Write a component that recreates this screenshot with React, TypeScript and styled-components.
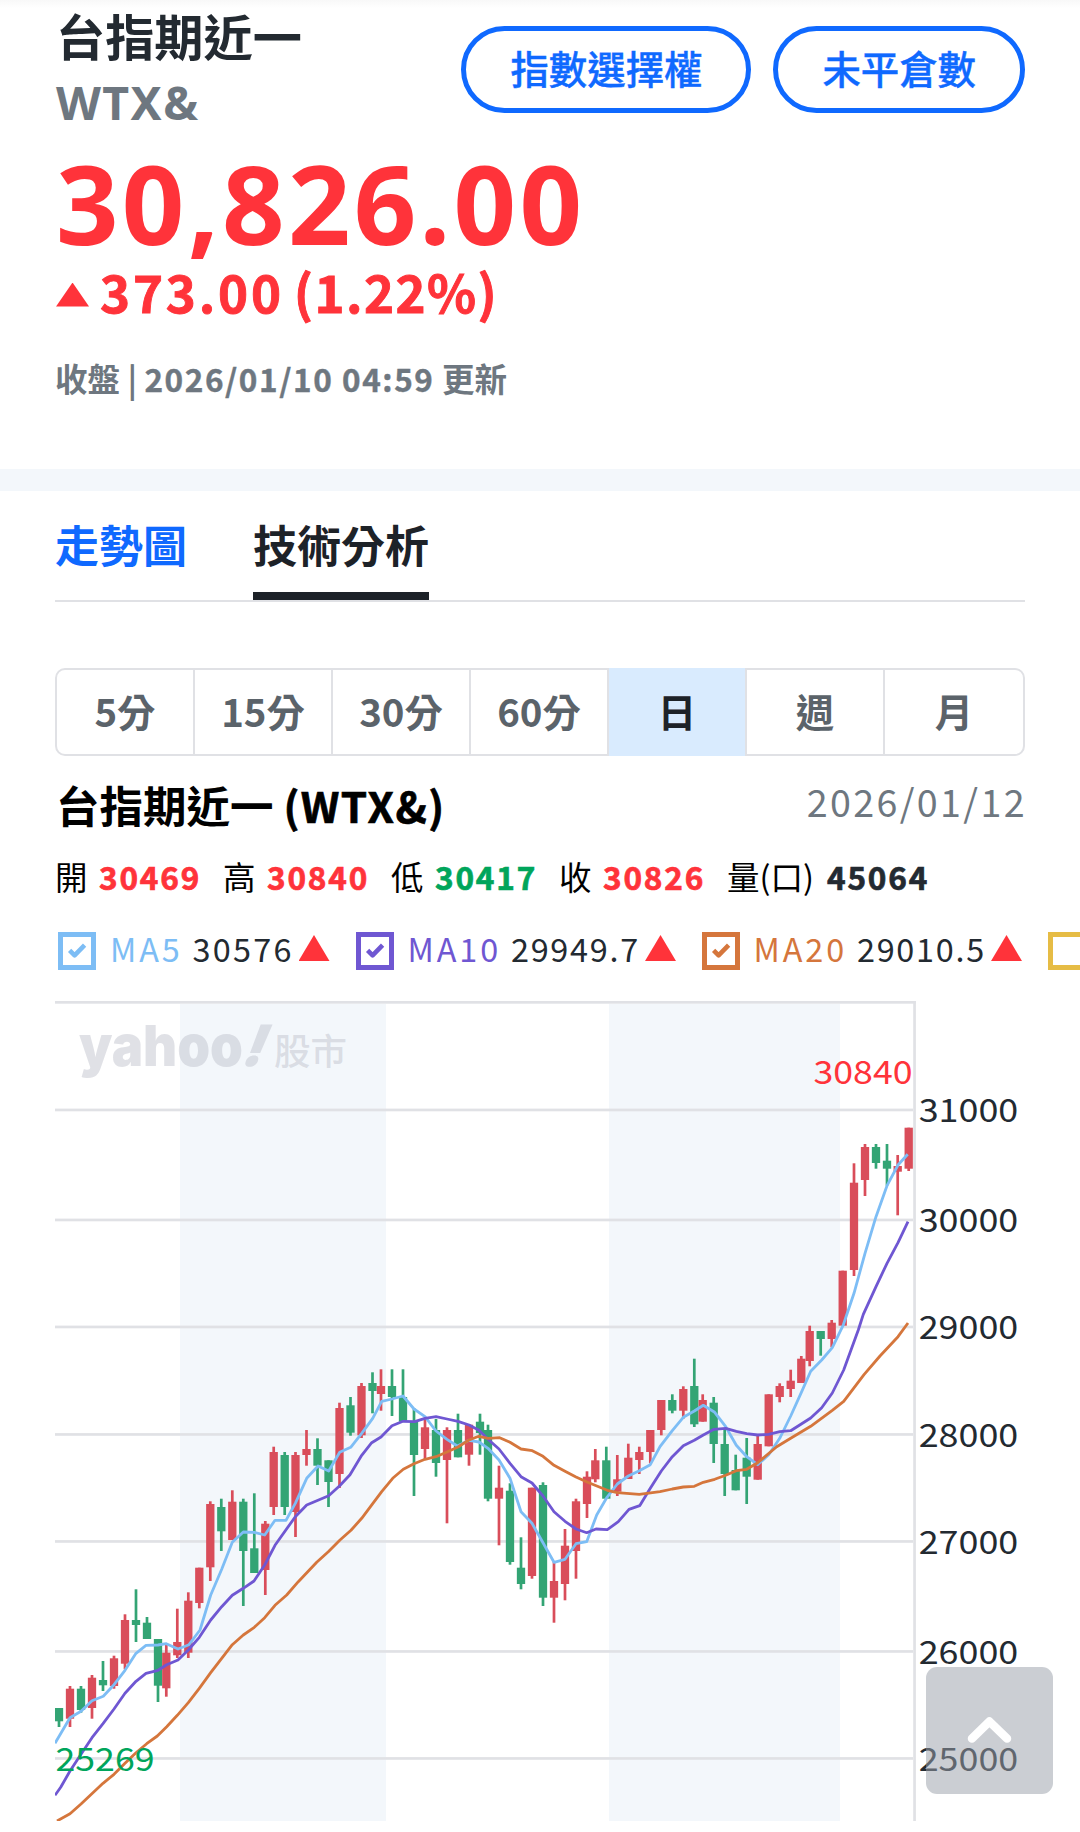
import React from "react";
import styled, { createGlobalStyle } from "styled-components";

const C = {
  ink: "#232a31",
  dark: "#1d2228",
  grey: "#6e7780",
  tabGrey: "#5b636a",
  blue: "#0f69ff",
  red: "#ff333a",
  green: "#00a55b",
  line: "#e0e1e5",
  band: "#f3f7fb",
  candleUp: "#d94d5a",
  candleDown: "#33a474",
  ma5: "#7dbdf5",
  ma10: "#6f57d2",
  ma20: "#d5763c",
  ma60: "#e6bc45",
};

const GlobalStyle = createGlobalStyle`
  html, body { margin: 0; background: #fff; }
  body { font-family: "Noto Sans CJK TC", "Noto Sans", sans-serif; color: ${C.ink}; }
  * { box-sizing: border-box; }
`;

const Page = styled.main`
  width: 1080px;
  height: 1832px;
  overflow: hidden;
  background: #fff;
`;

const Num = styled.span<{ $track?: number; $stroke?: number }>`
  font-size: 0.97em;
  letter-spacing: ${(p) => p.$track ?? 0.045}em;
  -webkit-text-stroke: ${(p) => p.$stroke ?? 0}px currentColor;
`;

/* ---------- quote header ---------- */

const Header = styled.header`
  height: 469px;
  padding: 1px 55px 0;
  background: linear-gradient(#f8f8f8, #fff 8px);
`;

const TopRow = styled.div`
  display: flex;
  justify-content: space-between;
  align-items: flex-start;
  height: 135px;
`;

const Name = styled.h1`
  margin: 0;
  padding-left: 1px;
  font-size: 49.2px;
  line-height: 68px;
  font-weight: 700;
`;

const Symbol = styled.div`
  padding: 1px 0 0 1px;
  font-family: "Noto Sans", sans-serif;
  font-size: 46.5px;
  line-height: 64px;
  font-weight: 700;
  letter-spacing: 1.4px;
  color: ${C.grey};
`;

const Actions = styled.div`
  display: flex;
  gap: 22px;
  padding-top: 25px;
`;

const Pill = styled.button`
  height: 87px;
  padding: 0 44px 4px;
  border: 5px solid ${C.blue};
  border-radius: 44px;
  background: #fff;
  color: ${C.blue};
  font: 500 38.4px/1 "Noto Sans CJK TC", sans-serif;
  -webkit-text-stroke: 0.4px ${C.blue};
`;

const Price = styled.div`
  height: 131px;
  padding-left: 1px;
  font-family: "Noto Sans", sans-serif;
  font-size: 109.5px;
  line-height: 134px;
  font-weight: 700;
  letter-spacing: 3.2px;
  color: ${C.red};
`;

const Change = styled.div`
  display: flex;
  align-items: center;
  height: 49px;
  padding-left: 1px;
  font-size: 51px;
  line-height: 49px;
  font-weight: 700;
  color: ${C.red};
  -webkit-text-stroke: 0.9px ${C.red};
  letter-spacing: 2.8px;
`;

const Percent = styled.span`
  margin-left: 10px;
  letter-spacing: 1.4px;
`;

const UpArrow = styled.i<{ $w: number; $h: number; $mt?: number; $mr?: number }>`
  width: ${(p) => p.$w}px;
  height: ${(p) => p.$h}px;
  margin: ${(p) => p.$mt ?? 6}px ${(p) => p.$mr ?? 0}px 0 0;
  background: ${C.red};
  clip-path: polygon(50% 0, 100% 100%, 0 100%);
  flex: none;
`;

const Meta = styled.div`
  margin-top: 40px;
  font-size: 32.5px;
  line-height: 44px;
  font-weight: 700;
  color: ${C.grey};
  white-space: nowrap;
`;

const Divider = styled.div`
  height: 22px;
  background: ${C.band};
`;

/* ---------- tabs ---------- */

const Body = styled.section`
  padding: 0 55px;
`;

const Tabs = styled.nav`
  display: flex;
  gap: 66px;
  height: 111px;
  border-bottom: 2px solid ${C.line};
`;

const Tab = styled.a<{ $active?: boolean }>`
  height: 109px;
  padding-top: 21px;
  font-size: 44px;
  line-height: 65px;
  font-weight: 700;
  color: ${(p) => (p.$active ? C.dark : C.blue)};
  border-bottom: 8px solid ${(p) => (p.$active ? C.dark : "transparent")};
`;

const Periods = styled.div`
  display: flex;
  height: 88px;
  margin-top: 66px;
  border: 2px solid ${C.line};
  border-radius: 10px;
`;

const Period = styled.button<{ $active?: boolean }>`
  flex: 0 0 138px;
  margin: ${(p) => (p.$active ? "-2px 0" : "0")};
  padding: 0 0 4px;
  border: 0;
  border-right: 2px solid ${C.line};
  background: ${(p) => (p.$active ? "#d9ebfe" : "transparent")};
  color: ${(p) => (p.$active ? C.dark : C.tabGrey)};
  font: 700 38.4px/1 "Noto Sans CJK TC", sans-serif;
  &:last-child { flex: 1; border-right: 0; }
`;

/* ---------- chart heading ---------- */

const TitleRow = styled.div`
  display: flex;
  align-items: center;
  justify-content: space-between;
  height: 96px;
`;

const ChartTitle = styled.h2`
  margin: 2px 0 0;
  padding-left: 1px;
  font-size: 43.5px;
  line-height: 64px;
  font-weight: 700;
  color: #000;
`;

const ChartDate = styled.time`
  margin: 0 -2px 8px 0;
  font-size: 38.8px;
  color: ${C.grey};
`;

const Ohlc = styled.div`
  display: flex;
  height: 48px;
  font-size: 32.5px;
  line-height: 48px;
  color: #000;
`;

const OhlcItem = styled.div`
  display: flex;
  flex: 0 0 168px;
  white-space: nowrap;
`;

const OhlcLabel = styled.span<{ $w?: number }>`
  flex: 0 0 ${(p) => p.$w ?? 44}px;
`;

const OhlcValue = styled.b<{ $c: string }>`
  color: ${(p) => p.$c};
`;

const Legend = styled.div`
  display: flex;
  align-items: center;
  height: 101px;
  margin-right: -55px;
  padding-left: 3px;
  overflow: hidden;
`;

const LegendItem = styled.label<{ $w: number }>`
  display: flex;
  align-items: center;
  flex: 0 0 ${(p) => p.$w}px;
  font-size: 33.4px;
  white-space: nowrap;
`;

const Box = styled.span<{ $c: string }>`
  display: grid;
  place-items: center;
  flex: none;
  width: 38px;
  height: 38px;
  border: 5px solid ${(p) => p.$c};
`;

const MaName = styled.span<{ $c: string; $w: number }>`
  flex: 0 0 ${(p) => p.$w}px;
  margin: 0 0 6px 14px;
  color: ${(p) => p.$c};
`;

const MaValue = styled.span<{ $w: number }>`
  flex: 0 0 ${(p) => p.$w}px;
  margin-bottom: 6px;
`;

/* ---------- chart ---------- */

const ChartSvg = styled.svg`
  display: block;
  width: 970px;
  height: 820px;
`;

const AxisText = styled.text`
  font-family: "Noto Sans CJK TC", sans-serif;
  font-size: 32.4px;
`;

const Brand = styled.text`
  font-family: Inter, sans-serif;
  font-weight: 900;
  font-size: 57px;
`;

const BrandSuffix = styled.text`
  font-family: "Noto Sans CJK TC", sans-serif;
  font-weight: 500;
  font-size: 36.5px;
`;

const ToTop = styled.button`
  position: fixed;
  left: 926px;
  top: 1667px;
  width: 127px;
  height: 127px;
  padding: 0;
  border: 0;
  border-radius: 11px;
  background: rgba(154, 160, 169, 0.514);
  svg { display: block; }
`;

type Candle = [x: number, high: number, top: number, bottom: number, low: number, up: 0 | 1];

const CANDLES: Candle[] = [
  [59, 1708, 1708, 1721.3, 1727, 0],
  [70, 1686, 1688.7, 1718.7, 1727, 1],
  [81, 1686, 1688.7, 1710, 1712.7, 0],
  [92, 1675, 1677.7, 1708, 1718.7, 1],
  [103, 1661, 1680, 1685.3, 1691, 0],
  [114, 1655.7, 1658.3, 1686, 1688.7, 1],
  [125, 1614.3, 1620, 1663.7, 1669.3, 1],
  [136, 1589.3, 1620, 1625, 1642, 0],
  [147, 1617, 1622.7, 1639, 1639, 0],
  [158, 1639, 1639, 1685.7, 1702, 0],
  [166.3, 1644.3, 1652.7, 1688.3, 1696.7, 1],
  [177.3, 1608.7, 1642, 1655.3, 1658, 1],
  [188.3, 1592.3, 1600.7, 1652.7, 1658, 1],
  [199.3, 1567.7, 1567.7, 1603, 1608.3, 1],
  [210.3, 1501.3, 1504, 1567.3, 1581, 1],
  [221.3, 1498.7, 1507, 1531.3, 1551, 0],
  [232.3, 1490.3, 1501.7, 1540, 1540, 1],
  [243.3, 1498.7, 1501.7, 1551, 1606, 0],
  [254.3, 1493.3, 1548.3, 1573, 1573, 0],
  [265.3, 1521, 1523.7, 1570, 1595, 1],
  [273.7, 1446.7, 1452, 1507, 1515, 1],
  [284.7, 1452, 1455, 1507, 1515, 0],
  [295.5, 1452, 1455, 1512, 1537, 1],
  [306.5, 1430, 1449, 1455, 1465.7, 1],
  [317.5, 1438.3, 1449, 1465.7, 1485, 0],
  [328.5, 1460.3, 1460.3, 1482, 1507, 0],
  [339.5, 1402.7, 1408, 1474, 1488, 1],
  [350.5, 1397, 1405.3, 1432.7, 1435.7, 0],
  [361.5, 1383, 1386, 1435.3, 1438, 1],
  [372.5, 1372.3, 1383, 1391, 1413.3, 0],
  [381, 1369.3, 1386, 1394, 1410.7, 1],
  [392, 1369.3, 1386, 1397, 1416, 0],
  [403, 1369.3, 1397, 1421.7, 1421.7, 0],
  [414, 1408, 1421.7, 1455, 1496, 0],
  [425, 1418.7, 1427.3, 1449, 1460, 1],
  [436, 1419, 1430, 1463, 1476.7, 0],
  [447, 1427.3, 1430, 1460, 1523.3, 1],
  [458, 1413.7, 1430, 1457.3, 1457.3, 0],
  [469, 1424.7, 1424.7, 1454.7, 1465.7, 1],
  [480, 1413.7, 1421.7, 1433, 1454.7, 0],
  [488, 1424.7, 1430, 1498.7, 1501.3, 0],
  [499, 1465.7, 1487.7, 1498.7, 1545.3, 1],
  [510, 1483.3, 1490.7, 1562, 1564.7, 0],
  [521, 1537.3, 1567.7, 1584, 1589.3, 0],
  [532, 1487.7, 1487.7, 1576, 1578.7, 1],
  [543, 1482.3, 1485, 1597.7, 1606, 0],
  [554, 1562, 1581, 1597.7, 1622.7, 1],
  [565, 1529, 1545.7, 1584, 1600.3, 1],
  [576, 1498.7, 1501.3, 1551, 1578.7, 1],
  [587, 1471.3, 1476.7, 1504, 1518, 1],
  [595.3, 1449, 1460.3, 1479.3, 1482.3, 1],
  [606.3, 1446.7, 1460.3, 1498.7, 1498.7, 0],
  [617.3, 1455, 1479.3, 1491.7, 1496, 1],
  [628.3, 1443.7, 1457.7, 1479, 1479, 1],
  [639.3, 1446.7, 1452, 1460, 1474, 1],
  [650.3, 1430, 1430, 1452, 1463.3, 1],
  [661.3, 1400, 1400, 1430, 1435.3, 1],
  [672.3, 1394.3, 1400, 1410.7, 1413.3, 0],
  [683.3, 1386.3, 1389, 1410.7, 1418.7, 1],
  [694.3, 1358.7, 1386, 1424.3, 1427, 0],
  [702.7, 1394.3, 1400, 1421.7, 1421.7, 1],
  [713.7, 1397, 1402.7, 1444, 1463, 0],
  [724.7, 1428.3, 1444, 1474, 1496, 0],
  [735.7, 1454.7, 1470, 1490.3, 1490.3, 0],
  [746.7, 1438, 1457.7, 1476.7, 1504, 0],
  [757.7, 1435, 1444, 1479.7, 1479.7, 1],
  [768.7, 1394.3, 1394.3, 1446.3, 1446.3, 1],
  [779.7, 1383.3, 1386, 1397, 1402.3, 1],
  [790.7, 1369.7, 1380.7, 1389, 1397, 1],
  [801.3, 1356, 1358.7, 1383, 1383, 1],
  [809.7, 1325.7, 1331, 1361, 1366.3, 1],
  [820.7, 1331, 1331, 1339, 1355.7, 0],
  [831.7, 1320, 1322.7, 1339, 1347.3, 1],
  [842.7, 1270.7, 1270.7, 1325.7, 1325.7, 1],
  [854, 1163.3, 1182.7, 1270, 1276, 1],
  [865, 1144, 1147, 1180, 1196, 1],
  [876, 1144, 1147, 1163, 1168.7, 0],
  [887, 1144, 1160.7, 1168.7, 1185.7, 0],
  [897.7, 1155, 1166, 1171.7, 1215.3, 1],
  [908.7, 1127.7, 1127.7, 1168.7, 1171, 1],
];

const MA5 =
  "55,1743.3 70,1717.7 81,1711.3 92,1700.7 103.3,1696.3 114,1684.7 125,1670.3 136,1653.3 146,1645.3 158,1645 166.3,1643.7 178,1649 189,1644.7 200,1630 210.7,1595 221.7,1569.3 232.3,1542.3 243.3,1532 254.3,1532.3 264.7,1535 275,1520.3 286,1520.3 295.3,1503.3 306.7,1478.3 318,1466 328.7,1471 339.7,1452.3 350.7,1447.3 361.7,1433.3 372.7,1418.3 381.7,1401.3 392,1399 403,1396 414,1409 425,1416.7 436,1431 447,1439.3 457.3,1446 469,1440.3 479,1442 488,1448.3 499,1460 510,1478.3 521,1511.7 532,1523.3 543,1542.7 554,1562.3 565,1559.3 576,1543.7 586.7,1541.7 596.7,1515 607,1497.3 617.3,1484 628.3,1476 639.3,1470.7 650.3,1464.7 660,1446.7 672.3,1430.7 683.3,1417.3 694.3,1411 703.3,1405.3 714.7,1412.3 725.7,1426.7 736.3,1445.3 746.7,1456.7 757.7,1464.7 768.7,1454.7 779.7,1438.3 790.7,1416 801.7,1391.7 810.7,1371.3 821.7,1360 832.3,1347.7 843,1325.7 854,1293.3 865,1253.3 876,1216.7 887,1185.7 898,1165 907.7,1154.3";

const MA10 =
  "55,1795.3 60.7,1787.3 70,1771 81,1754.3 92,1737.7 103,1723.7 114,1709 125,1693.3 136,1681.3 146,1673.3 158,1670.3 166.7,1664.7 178,1660 188.3,1650 199.3,1637.3 210.7,1620 221.7,1606.7 232.3,1595.3 243.3,1588.3 254,1581 264.7,1565 275,1545.3 295.3,1516.7 306.7,1505 328.7,1495.7 339.7,1485.7 350,1474.7 361.7,1455.3 371.7,1442.7 381,1437 392,1425.7 403,1421.3 414.7,1421.7 425,1418.3 436,1416.7 447,1419 458,1421.3 469,1425 479,1430.3 488,1439.3 499,1449 510,1463.3 521,1476.7 532,1483 543,1496 554,1511.7 565,1521.3 576,1529 586.7,1532.7 596,1529 607.3,1529.7 618.3,1521.7 629,1509.3 639.7,1505.7 650.3,1488.3 661.3,1471 672.3,1456.7 683.3,1445.7 694.3,1440.3 703.3,1435 714,1429.3 725.7,1428.3 736.3,1431.3 746.7,1433.7 757.7,1435 768.7,1434.3 779.7,1431.7 790.7,1430.7 810.7,1418 821.7,1407.7 832.3,1393 843.7,1370 858.3,1330 863.3,1314.3 876,1286.7 887,1263.3 898,1242.7 908,1221.7";

const MA20 =
  "57,1821 70,1813.7 81,1804 103,1783.3 114,1774.3 125,1763.3 136,1752.7 146.7,1743.7 157.3,1736 166.7,1726.7 177.3,1715.3 188.3,1702.7 199.3,1688.3 210.7,1672.7 221.7,1658.3 232.3,1644.7 243.3,1635 254.3,1627.3 264.7,1617.7 275,1605.3 286.7,1595 298.3,1581.7 316.7,1562.3 328.3,1551.7 340,1540 351,1530.3 361.7,1518.3 372.7,1503.7 381.7,1491.7 392.7,1478.3 403.3,1469.3 414,1463.7 425,1459.3 436,1456.7 447,1452 458,1447 469,1440 478.7,1436.3 488,1438.3 499.7,1437.7 510,1442.3 521,1449 532.3,1450.7 543,1456.3 554,1465.3 565,1471.3 576,1477 587,1482 607.3,1490.3 617.3,1492.7 639.3,1494.3 660,1491.7 672.3,1489 683.3,1487 694.3,1486.3 703.3,1482.3 714.7,1479.3 725.7,1475.3 736.3,1470.7 746.7,1469.3 757.7,1462.7 776.7,1446.7 790.7,1438.3 810.7,1426.3 832.3,1410.3 843.7,1401.3 864,1374.7 880,1356 898,1336.7 908,1323";

const GRID: [number, number][] = [
  [31000, 1110],
  [30000, 1220],
  [29000, 1327],
  [28000, 1434.5],
  [27000, 1541.5],
  [26000, 1651.5],
  [25000, 1758.5],
];

const Line = ({ pts, color }: { pts: string; color: string }) => (
  <polyline points={pts} fill="none" stroke={color} strokeWidth={2.8} strokeLinejoin="round" />
);

const Chart = () => (
  <ChartSvg viewBox="55 1001 970 820">
    <rect x={180} y={1004} width={206} height={817} fill={C.band} />
    <rect x={609} y={1004} width={231} height={817} fill={C.band} />
    <g fill={C.line}>
      <rect x={55} y={1001} width={861} height={2.7} />
      <rect x={913.2} y={1001} width={2.7} height={820} />
      {GRID.map(([v, y]) => (
        <rect key={v} x={55} y={y - 1.4} width={858} height={2.7} />
      ))}
    </g>
    <g fill="#babdc7" fillOpacity={0.45}>
      <Brand x={79} y={1065.5} textLength={164} lengthAdjust="spacingAndGlyphs">
        yahoo
      </Brand>
      <Brand x={0} y={0} transform="translate(239 1065.5) skewX(-22)">
        !
      </Brand>
      <BrandSuffix x={274} y={1064.5} textLength={73}>
        股市
      </BrandSuffix>
    </g>
    {CANDLES.map(([x, h, t, b, l, up]) => (
      <g key={x} fill={up ? C.candleUp : C.candleDown}>
        <rect x={x - 1.35} y={h} width={2.7} height={l - h} />
        <rect x={x - 4.15} y={t} width={8.3} height={b - t} />
      </g>
    ))}
    <Line pts={MA5} color={C.ma5} />
    <Line pts={MA10} color={C.ma10} />
    <Line pts={MA20} color={C.ma20} />
    <AxisText x={813.5} y={1083.5} textLength={99} lengthAdjust="spacingAndGlyphs" fill={C.red}>
      30840
    </AxisText>
    <AxisText x={55.5} y={1770.5} textLength={99} lengthAdjust="spacingAndGlyphs" fill={C.green}>
      25269
    </AxisText>
    {GRID.map(([v, y]) => (
      <AxisText key={v} x={918.7} y={y + 12} textLength={99.5} lengthAdjust="spacingAndGlyphs" fill={C.ink}>
        {v}
      </AxisText>
    ))}
  </ChartSvg>
);

const Tick = ({ color }: { color: string }) => (
  <svg width={28} height={28} viewBox="0 0 28 28">
    <path d="M6.6 13.4l5 5L21.6 8.2" fill="none" stroke={color} strokeWidth={4.6} strokeLinejoin="round" />
  </svg>
);

const OHLC = [
  { k: "開", v: "30469", c: C.red },
  { k: "高", v: "30840", c: C.red },
  { k: "低", v: "30417", c: C.green },
  { k: "收", v: "30826", c: C.red },
  { k: "量(口)", v: "45064", c: C.ink, w: 100 },
];

const MAS = [
  { k: "MA5", v: "30576", c: C.ma5, w: 297.5, kw: 82.5, vw: 106 },
  { k: "MA10", v: "29949.7", c: C.ma10, w: 346, kw: 103.5, vw: 134 },
  { k: "MA20", v: "29010.5", c: C.ma20, w: 346.5, kw: 103.5, vw: 134 },
];

const PERIODS = ["5分", "15分", "30分", "60分", "日", "週", "月"];

export default function App() {
  return (
    <Page>
      <GlobalStyle />
      <Header>
        <TopRow>
          <div>
            <Name>台指期近一</Name>
            <Symbol>WTX&amp;</Symbol>
          </div>
          <Actions>
            <Pill>指數選擇權</Pill>
            <Pill>未平倉數</Pill>
          </Actions>
        </TopRow>
        <Price>30,826.00</Price>
        <Change>
          <UpArrow $w={33} $h={24} $mr={11} />
          <span>373.00</span>
          <Percent>(1.22%)</Percent>
        </Change>
        <Meta>
          收盤 | <Num $track={0.05} $stroke={0.4}>2026/01/10 04:59</Num> 更新
        </Meta>
      </Header>
      <Divider />
      <Body>
        <Tabs>
          <Tab>走勢圖</Tab>
          <Tab $active>技術分析</Tab>
        </Tabs>
        <Periods>
          {PERIODS.map((p) => (
            <Period key={p} $active={p === "日"}>
              {p}
            </Period>
          ))}
        </Periods>
        <TitleRow>
          <ChartTitle>
            台指期近一 <Num $track={0.034} $stroke={0.7}>(WTX&amp;)</Num>
          </ChartTitle>
          <ChartDate>
            <Num $track={0.063}>2026/01/12</Num>
          </ChartDate>
        </TitleRow>
        <Ohlc>
          {OHLC.map((o) => (
            <OhlcItem key={o.k}>
              <OhlcLabel $w={o.w}>{o.k}</OhlcLabel>
              <OhlcValue $c={o.c}>
                <Num $track={0.058} $stroke={0.7}>{o.v}</Num>
              </OhlcValue>
            </OhlcItem>
          ))}
        </Ohlc>
        <Legend>
          {MAS.map((m) => (
            <LegendItem key={m.k} $w={m.w}>
              <Box $c={m.c}>
                <Tick color={m.c} />
              </Box>
              <MaName $c={m.c} $w={m.kw}>
                <Num $track={0.09}>{m.k}</Num>
              </MaName>
              <MaValue $w={m.vw}>
                <Num $track={m.k === "MA5" ? 0.07 : 0.053}>{m.v}</Num>
              </MaValue>
              <UpArrow $w={31} $h={26} $mt={-5} />
            </LegendItem>
          ))}
          <Box $c={C.ma60} />
        </Legend>
        <Chart />
      </Body>
      <ToTop aria-label="top">
        <svg width={127} height={127} viewBox="0 0 127 127">
          <path d="M46 71.5L63.4 54.5L81 71.5" fill="none" stroke="#fff" strokeWidth={8.5} strokeLinecap="round" strokeLinejoin="round" />
        </svg>
      </ToTop>
    </Page>
  );
}
